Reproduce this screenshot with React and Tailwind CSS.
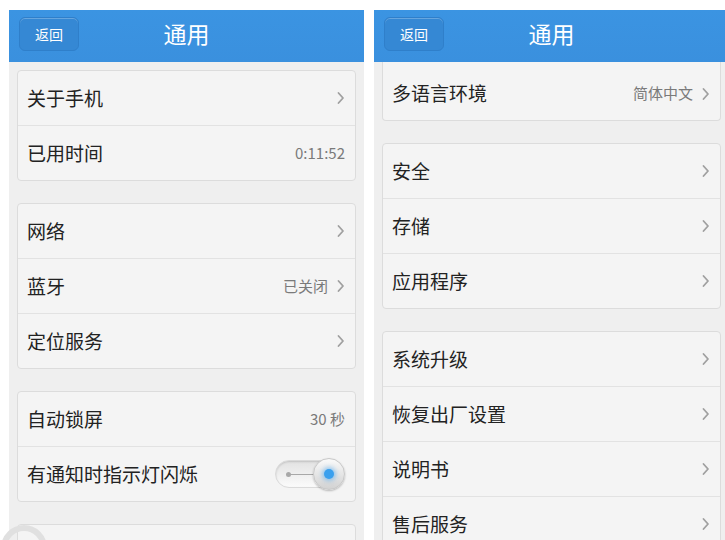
import React from "react";

const font = { fontFamily: '"Noto Sans CJK SC", "Noto Sans", sans-serif' };

const Chevron = () => (
  <svg width="9" height="14" viewBox="0 0 9 14" className="shrink-0">
    <path d="M2.5 2 L7 7 L2.5 12" fill="none" stroke="#a0a0a0" strokeWidth="1.8" strokeLinecap="round" strokeLinejoin="round" />
  </svg>
);

const Toggle = () => (
  <div className="relative w-[72px] h-[34px]">
    <div className="absolute left-[2px] top-[3px] w-[64px] h-[28px] rounded-full bg-gradient-to-b from-[#e2e2e2] to-[#fbfbfb] shadow-[inset_0_1px_2px_rgba(0,0,0,0.15)] border border-[#dadada]" />
    <div className="absolute left-[13px] top-[15px] w-[5px] h-[5px] rounded-full bg-[#a8a8a8]" />
    <div className="absolute left-[16px] top-[17px] w-[30px] h-[1px] bg-[#a8a8a8]" />
    <div className="absolute left-[40px] top-[1px] w-[32px] h-[32px] rounded-full bg-gradient-to-b from-[#fafafa] to-[#d2d2d2] border border-[#c8c8c8] shadow-[0_1px_2px_rgba(0,0,0,0.25)] flex items-center justify-center">
      <div className="w-[10px] h-[10px] rounded-full bg-[#3aa0ee] shadow-[0_0_4px_2px_rgba(80,170,240,0.55)]" />
    </div>
  </div>
);

const Row = ({ label, value, arrow = true, toggle = false, last = false }) => (
  <div className={`flex items-center justify-between h-[54px] pl-[9px] pr-[10px] ${last ? "" : "border-b border-[#e2e2e2] box-content"}`}>
    <span className="text-[19px] text-[#222]">{label}</span>
    <div className="flex items-center gap-[8px]">
      {value && <span className="text-[15px] text-[#7a7a7a]">{value}</span>}
      {toggle && <Toggle />}
      {arrow && <Chevron />}
    </div>
  </div>
);

const Card = ({ rows, className = "" }) => (
  <div className={`bg-[#f4f4f4] border border-[#dcdcdc] rounded-[4px] ${className}`}>
    {rows.map((r, i) => (
      <Row key={r.label} {...r} last={i === rows.length - 1} />
    ))}
  </div>
);

const Header = () => (
  <div className="h-[52px] shrink-0 bg-gradient-to-b from-[#3b94e2] to-[#3a90de] relative">
    <div className="absolute left-[10px] top-[7px] w-[60px] h-[34px] rounded-[6px] bg-[#3588d4] border border-[#2f7fca] shadow-[inset_0_1px_0_rgba(255,255,255,0.25)] flex items-center justify-center text-[14px] leading-none text-white">
      返回
    </div>
    <div className="absolute inset-x-0 top-[12px] text-center text-[23px] leading-none text-white">
      通用
    </div>
  </div>
);

export default function App() {
  return (
    <div className="relative w-[725px] h-[540px] bg-white flex overflow-hidden" style={font}>
      <div className="ml-[9px] mt-[10px] w-[355px] shrink-0 flex flex-col bg-[#efefef]">
        <Header />
        <div className="px-[8px] pt-[8px] flex flex-col gap-[22px]">
          <Card
            rows={[
              { label: "关于手机" },
              { label: "已用时间", value: "0:11:52", arrow: false },
            ]}
          />
          <Card
            rows={[
              { label: "网络" },
              { label: "蓝牙", value: "已关闭" },
              { label: "定位服务" },
            ]}
          />
          <Card
            rows={[
              { label: "自动锁屏", value: "30 秒", arrow: false },
              { label: "有通知时指示灯闪烁", arrow: false, toggle: true },
            ]}
          />
          <Card rows={[{ label: "" }]} />
        </div>
      </div>

      <div className="ml-[10px] mt-[10px] w-[355px] shrink-0 flex flex-col bg-[#efefef]">
        <Header />
        <div className="px-[8px] flex flex-col gap-[22px]">
          <div className="bg-[#f4f4f4] border border-t-0 border-[#dcdcdc] rounded-b-[4px] h-[59px] flex items-center justify-between pl-[9px] pr-[10px] pt-[5px]">
            <span className="text-[19px] text-[#222]">多语言环境</span>
            <div className="flex items-center gap-[8px]">
              <span className="text-[15px] text-[#7a7a7a]">简体中文</span>
              <Chevron />
            </div>
          </div>
          <Card rows={[{ label: "安全" }, { label: "存储" }, { label: "应用程序" }]} />
          <Card
            rows={[
              { label: "系统升级" },
              { label: "恢复出厂设置" },
              { label: "说明书" },
              { label: "售后服务" },
            ]}
          />
        </div>
      </div>

      <svg className="absolute left-[-6px] top-[520px]" width="70" height="40" viewBox="0 0 70 40">
        <circle cx="30" cy="28" r="20" fill="none" stroke="#e0e0e0" strokeWidth="6" />
      </svg>
    </div>
  );
}
